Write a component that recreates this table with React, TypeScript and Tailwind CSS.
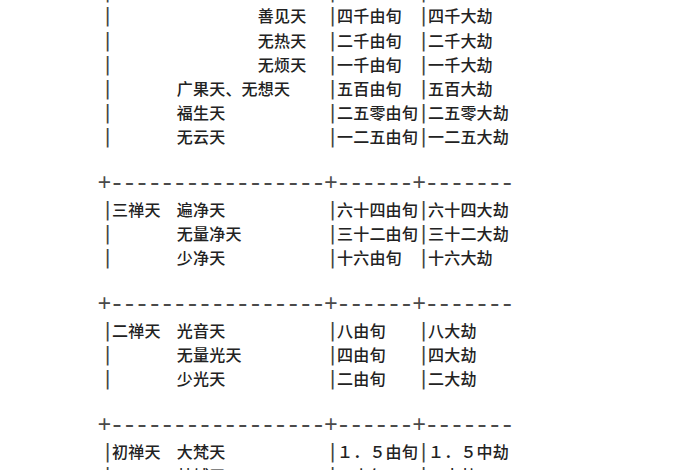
type Row =
  | { kind: "text"; name: string; size: string; life: string }
  | { kind: "sep" }
  | { kind: "blank" };

const rows: Row[] = [
  { kind: "text", name: "　　　　　　　　　善现天", size: "八千由旬", life: "八千大劫" },
  { kind: "text", name: "　　　　　　　　　善见天", size: "四千由旬", life: "四千大劫" },
  { kind: "text", name: "　　　　　　　　　无热天", size: "二千由旬", life: "二千大劫" },
  { kind: "text", name: "　　　　　　　　　无烦天", size: "一千由旬", life: "一千大劫" },
  { kind: "text", name: "　　　　广果天、无想天", size: "五百由旬", life: "五百大劫" },
  { kind: "text", name: "　　　　福生天", size: "二五零由旬", life: "二五零大劫" },
  { kind: "text", name: "　　　　无云天", size: "一二五由旬", life: "一二五大劫" },
  { kind: "blank" },
  { kind: "sep" },
  { kind: "text", name: "三禅天　遍净天", size: "六十四由旬", life: "六十四大劫" },
  { kind: "text", name: "　　　　无量净天", size: "三十二由旬", life: "三十二大劫" },
  { kind: "text", name: "　　　　少净天", size: "十六由旬", life: "十六大劫" },
  { kind: "blank" },
  { kind: "sep" },
  { kind: "text", name: "二禅天　光音天", size: "八由旬", life: "八大劫" },
  { kind: "text", name: "　　　　无量光天", size: "四由旬", life: "四大劫" },
  { kind: "text", name: "　　　　少光天", size: "二由旬", life: "二大劫" },
  { kind: "blank" },
  { kind: "sep" },
  { kind: "text", name: "初禅天　大梵天", size: "１．５由旬", life: "１．５中劫" },
  { kind: "text", name: "　　　　梵辅天", size: "１由旬", life: "１中劫" },
];

const SEP = "+-----------------+------+-------".split("");

function Bar() {
  return (
    <span className="w-[9px] shrink-0 text-center font-['DejaVu_Sans',sans-serif] text-[20px] leading-none text-[#444]">
      |
    </span>
  );
}

function Cell({ text }: { text: string }) {
  return (
    <span className="whitespace-pre tracking-[0.2px] font-medium text-[#222]">{text}</span>
  );
}

export default function App() {
  return (
    <div className="h-[470px] w-[700px] overflow-hidden bg-white">
      <div className="mt-[-20.8px] pl-[103px] font-['Noto_Sans_CJK_SC','Noto_Sans',sans-serif] text-[16px]">
        {rows.map((row, i) => {
          if (row.kind === "blank") return <div key={i} className="h-[24.2px]" />;
          if (row.kind === "sep")
            return (
              <div key={i} className="-ml-[5px] flex h-[24.2px] items-center leading-none text-[#4a4a4a]">
                {SEP.map((ch, j) =>
                  ch === "+" ? (
                    <span key={j} className="flex w-[12.6px] shrink-0 justify-center overflow-visible font-['Liberation_Mono',monospace] text-[23px]">
                      +
                    </span>
                  ) : (
                    <span key={j} className="flex w-[12.6px] shrink-0 justify-center overflow-visible font-['Liberation_Mono',monospace] text-[25px]">
                      -
                    </span>
                  )
                )}
              </div>
            );
          return (
            <div key={i} className="flex h-[24.2px] items-center leading-none">
              <div className="flex w-[225px] shrink-0 items-center">
                <Bar />
                <Cell text={row.name} />
              </div>
              <div className="flex w-[91px] shrink-0 items-center">
                <Bar />
                <Cell text={row.size} />
              </div>
              <div className="flex items-center">
                <Bar />
                <Cell text={row.life} />
              </div>
            </div>
          );
        })}
      </div>
    </div>
  );
}
